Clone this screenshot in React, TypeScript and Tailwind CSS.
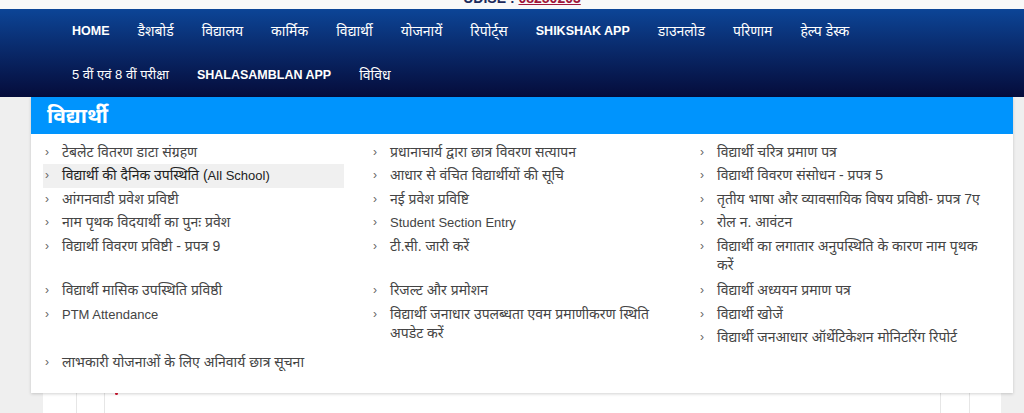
import React from "react";

const NAV_ROW_1 = [
    { label: "HOME", en: true },
    { label: "डैशबोर्ड" },
    { label: "विद्यालय" },
    { label: "कार्मिक" },
    { label: "विद्यार्थी" },
    { label: "योजनायें" },
    { label: "रिपोर्ट्स" },
    { label: "SHIKSHAK APP", en: true },
    { label: "डाउनलोड" },
    { label: "परिणाम" },
    { label: "हेल्प डेस्क" },
];

const NAV_ROW_2 = [
    { label: "5 वीं एवं 8 वीं परीक्षा", small: true },
    { label: "SHALASAMBLAN APP", en: true },
    { label: "विविध" },
];

// each group is a row of three lists, like the original mega menu
const GROUPS: string[][][] = [
    [
        [
            "टेबलेट वितरण डाटा संग्रहण",
            "विद्यार्थी की दैनिक उपस्थिति (All School)",
            "आंगनवाडी प्रवेश प्रविष्टी",
            "नाम पृथक विदयार्थी का पुनः प्रवेश",
            "विद्यार्थी विवरण प्रविष्टी - प्रपत्र 9",
        ],
        [
            "प्रधानाचार्य द्वारा छात्र विवरण सत्यापन",
            "आधार से वंचित विद्यार्थीयों की सूचि",
            "नई प्रवेश प्रविष्टि",
            "Student Section Entry",
            "टी.सी. जारी करें",
        ],
        [
            "विद्यार्थी चरित्र प्रमाण पत्र",
            "विद्यार्थी विवरण संसोधन - प्रपत्र 5",
            "तृतीय भाषा और व्यावसायिक विषय प्रविष्ठी- प्रपत्र 7ए",
            "रोल न. आवंटन",
            "विद्यार्थी का लगातार अनुपस्थिति के कारण नाम पृथक|करें",
        ],
    ],
    [
        ["विद्यार्थी मासिक उपस्थिति प्रविष्ठी", "PTM Attendance"],
        ["रिजल्ट और प्रमोशन", "विद्यार्थी जनाधार उपलब्धता एवम प्रमाणीकरण स्थिति|अपडेट करें"],
        ["विद्यार्थी अध्ययन प्रमाण पत्र", "विद्यार्थी खोजें", "विद्यार्थी जनआधार ऑर्थेटिकेशन मोनिटरिंग रिपोर्ट"],
    ],
    [["लाभकारी योजनाओं के लिए अनिवार्य छात्र सूचना"], [], []],
];

const FONT = "font-['Liberation_Sans','Noto_Sans',Arial,sans-serif]";

// latin runs are drawn a bit smaller than devanagari, as in the original
function Mixed({ text }: { text: string }) {
    const parts = text.split(/([A-Za-z][A-Za-z ()]*[A-Za-z)])/);
    return (
        <>
            {parts.map((p, i) =>
                i % 2 === 1 ? (
                    <span key={i} className="text-[13px]">{p}</span>
                ) : (
                    <React.Fragment key={i}>{p}</React.Fragment>
                )
            )}
        </>
    );
}

function MenuItem({ text, active }: { text: string; active?: boolean }) {
    const lines = text.split("|");
    return (
        <li
            className={`flex py-[2px] pl-[2px] text-[14px] leading-[19.5px] ${
                active ? "bg-[#f0f0f0] text-[#222]" : "text-[#444]"
            }`}
        >
            <span className="w-[17px] shrink-0 text-[#666] text-[12px]">›</span>
            <span className="whitespace-nowrap">
                {lines.map((l, i) => (
                    <React.Fragment key={i}>
                        {i > 0 && <br />}
                        <Mixed text={l} />
                    </React.Fragment>
                ))}
            </span>
        </li>
    );
}

export default function App() {
    return (
        <div className={`w-[1024px] h-[413px] overflow-hidden bg-[#efefef] ${FONT}`}>
            {/* Верхняя полоса (обрезана) */}
            <div className="h-[9px] overflow-hidden bg-[#f8f8f8] flex justify-center">
                <div className="-mt-[10px] ml-[20px] text-[14px] leading-[16px] font-bold">
                    <span className="text-[#1b2a5c]">UDISE : </span>
                    <span className="text-[#a0163a] underline">08250203</span>
                </div>
            </div>

            {/* Навигация */}
            <nav className="h-[88px] bg-gradient-to-b from-[#0c4597] to-[#050c3b] pl-[58px]">
                {[NAV_ROW_1, NAV_ROW_2].map((row, r) => (
                    <ul key={r} className="flex h-[44px] items-center">
                        {row.map((item: { label: string; en?: boolean; small?: boolean }) => (
                            <li
                                key={item.label}
                                className={`px-[14px] text-white whitespace-nowrap ${
                                    item.en
                                        ? "text-[12.5px] font-bold"
                                        : item.small
                                          ? "text-[13px]"
                                          : "text-[14px]"
                                }`}
                            >
                                {item.label}
                            </li>
                        ))}
                    </ul>
                ))}
            </nav>

            {/* Контент страницы под выпадающим меню */}
            <div className="relative">
                <div className="ml-[43px] w-[958px] h-[316px] bg-white flex flex-col justify-end">
                    <div className="flex h-[33px]">
                        <div className="w-[33px]" />
                        <div className="w-[28px] border-l border-[#e6e6e6]" />
                        <div className="w-[836px] border-l border-[#e6e6e6] pl-[10px]">
                            <span className="block w-[3px] h-[3px] mt-[12px] rounded-full bg-[#d0112b]" />
                        </div>
                        <div className="w-[29px] border-l border-[#e6e6e6]" />
                        <div className="flex-1 border-l border-[#e6e6e6]" />
                    </div>
                </div>

                {/* Выпадающее меню */}
                <div className="absolute top-0 left-[31px] w-[982px] bg-white shadow-[0_1px_3px_rgba(0,0,0,0.18)]">
                    <div className="h-[37px] bg-[#0094fd] flex items-center pl-[16px]">
                        <h2 className="text-white text-[21px] font-bold leading-none">विद्यार्थी</h2>
                    </div>
                    <div className="pt-[6.5px] pb-[18.5px] pl-[12px] flex flex-col gap-y-[1.5px]">
                        {GROUPS.map((group, g) => (
                            <div key={g} className="grid grid-cols-[328px_327px_1fr]">
                                {group.map((list, c) => (
                                    <ul key={c} className={c === 2 ? "pr-[12px]" : "pr-[27px]"}>
                                        {list.map((text, i) => (
                                            <MenuItem key={text} text={text} active={g === 0 && c === 0 && i === 1} />
                                        ))}
                                    </ul>
                                ))}
                            </div>
                        ))}
                    </div>
                </div>
            </div>
        </div>
    );
}
